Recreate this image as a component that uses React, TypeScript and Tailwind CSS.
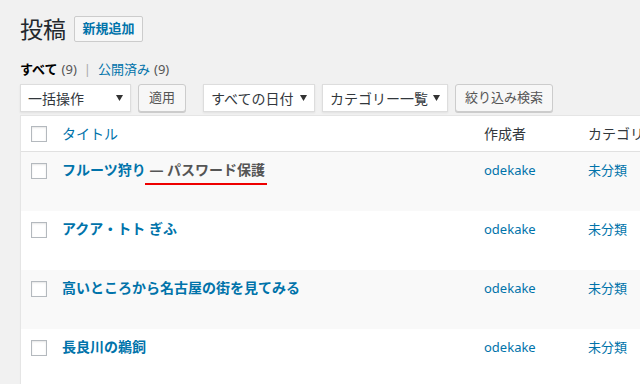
import React from "react";

const posts = [
  { title: "フルーツ狩り", protectedLabel: "— パスワード保護" },
  { title: "アクア・トト ぎふ" },
  { title: "高いところから名古屋の街を見てみる" },
  { title: "長良川の鵜飼" },
];

function Checkbox() {
  return (
    <span className="block h-4 w-4 border border-[#b4b9be] bg-white shadow-[inset_0_1px_2px_rgba(0,0,0,0.1)]" />
  );
}

function Select({ label, width }: { label: string; width: string }) {
  return (
    <div
      className={`flex h-[28px] items-center justify-between border border-[#ddd] bg-white pl-[7px] pr-[7px] text-[14px] text-[#32373c] shadow-[0_1px_2px_rgba(0,0,0,0.07)] ${width}`}
    >
      <span className="whitespace-nowrap">{label}</span>
      <svg width="7" height="6" viewBox="0 0 7 6" className="shrink-0">
        <path d="M0 0h7L3.5 6z" fill="#333" />
      </svg>
    </div>
  );
}

function Button({ label, className }: { label: string; className?: string }) {
  return (
    <div
      className={`flex h-[28px] items-center justify-center rounded-[3px] border border-[#ccc] bg-[#f7f7f7] text-[13px] text-[#555] shadow-[0_1px_0_#ccc] ${className ?? ""}`}
    >
      {label}
    </div>
  );
}

export default function App() {
  return (
    <div
      className="h-[384px] w-[640px] overflow-hidden bg-[#f1f1f1] pl-[20px] pt-[14px]"
      style={{ fontFamily: '"Noto Sans", "Noto Sans CJK JP", sans-serif' }}
    >
      {/* heading */}
      <div className="flex h-[30px] items-center gap-[8px]">
        <h1 className="text-[23px] leading-[30px] text-[#23282d]">投稿</h1>
        <div className="flex h-[26px] w-[69px] items-center justify-center rounded-[2px] border border-[#ccc] bg-[#f7f7f7] text-[13px] font-bold text-[#0073aa]">
          新規追加
        </div>
      </div>

      {/* status links */}
      <div className="mt-[16px] flex h-[18px] items-center text-[13px] leading-[18px]">
        <span className="font-bold text-black">すべて</span>
        <span className="ml-[4px] text-[#555]">(9)</span>
        <span className="mx-[7px] text-[#aaa]">|</span>
        <span className="text-[#0073aa]">公開済み</span>
        <span className="ml-[4px] text-[#555]">(9)</span>
      </div>

      {/* filters */}
      <div className="mt-[6px] flex h-[28px] items-center">
        <Select label="一括操作" width="w-[111px]" />
        <Button label="適用" className="ml-[7px] w-[48px]" />
        <Select label="すべての日付" width="ml-[17px] w-[112px]" />
        <Select label="カテゴリー一覧" width="ml-[7px] w-[126px]" />
        <Button label="絞り込み検索" className="ml-[7px] w-[98px]" />
      </div>

      {/* table */}
      <div className="mt-[3px] w-[700px] border-l border-t border-[#e5e5e5] bg-white shadow-[0_1px_1px_rgba(0,0,0,0.04)]">
        <div className="flex h-[36px] items-start border-b border-[#e1e1e1] bg-white">
          <div className="w-[41px] pl-[10px] pt-[10px]">
            <Checkbox />
          </div>
          <div className="w-[422px] pt-[8px] text-[14px] leading-[20px] text-[#0073aa]">タイトル</div>
          <div className="w-[104px] pt-[8px] text-[14px] leading-[20px] text-[#32373c]">作成者</div>
          <div className="whitespace-nowrap pt-[8px] text-[14px] leading-[20px] text-[#32373c]">カテゴリー</div>
        </div>
        {posts.map((p, i) => (
          <div
            key={i}
            className={`flex h-[59px] items-start ${i % 2 === 0 ? "bg-[#f9f9f9]" : "bg-white"}`}
          >
            <div className="w-[41px] pl-[10px] pt-[11px]">
              <Checkbox />
            </div>
            <div className="w-[422px] pt-[8px] text-[14px] font-bold leading-[20px] text-[#0073aa]">
              {p.title}
              {p.protectedLabel && (
                <>
                  {" "}
                  <span className="relative inline-block text-[#555]">
                    {p.protectedLabel}
                    <span className="absolute left-[-4px] right-[-2px] top-[23px] h-[2px] bg-[#e00]" />
                  </span>
                </>
              )}
            </div>
            <div className="w-[104px] pt-[9px] text-[13px] leading-[18px] text-[#0073aa]">odekake</div>
            <div className="pt-[9px] text-[13px] leading-[18px] text-[#0073aa]">未分類</div>
          </div>
        ))}
      </div>
    </div>
  );
}
